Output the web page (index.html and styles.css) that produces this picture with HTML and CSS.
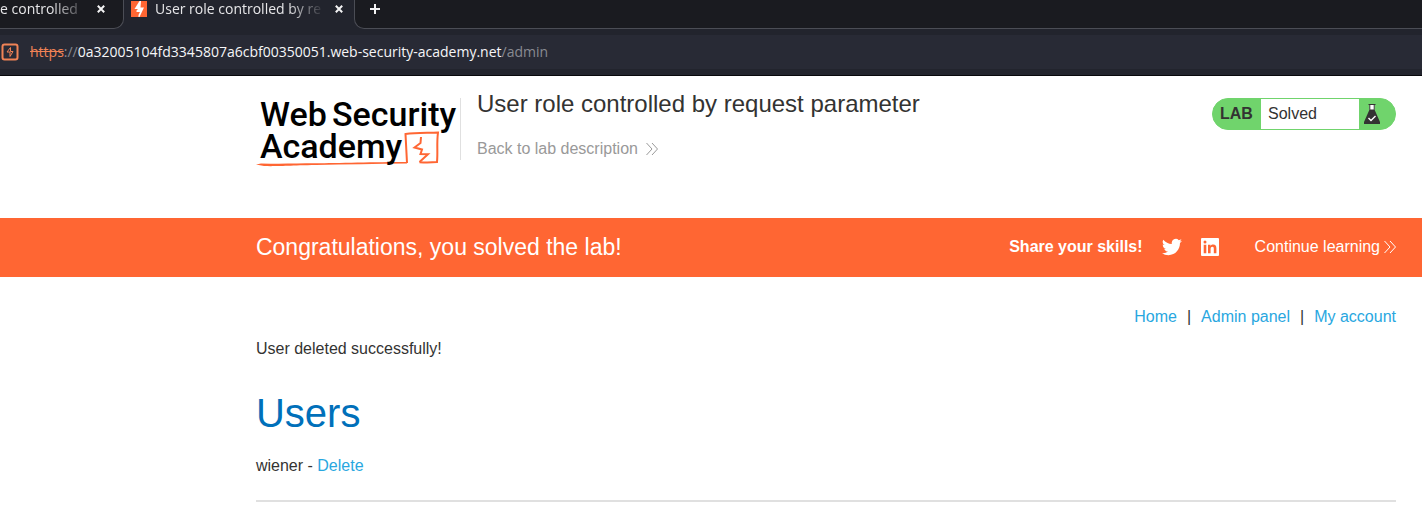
FILE: index.html
```html
<!DOCTYPE html>
<html lang="en">
<head>
<meta charset="utf-8">
<title>User role controlled by request parameter</title>
<link rel="stylesheet" href="styles.css">
</head>
<body>
<div class="browser">
  <div class="tabs">
    <div class="tab tab-previous">
      <span class="tab-title fade-dim">e controlled</span>
      <button class="tab-close" aria-label="Close previous tab"><svg width="8" height="8" viewBox="0 0 8 8"><path d="M.8.8l6.400 6.400M7.200.8L.8 7.200"/></svg></button>
    </div>
    <div class="tab tab-current">
      <svg class="favicon" width="16" height="16" viewBox="0 0 16 16"><path fill="#ff6633" d="M0 0h16v16H0z"/><path fill="#fff" d="M8.500 0H10L9.500 6.500H13L8.500 16H7.500V14L9 11H5.500V9.500L7 8H3.500z"/></svg>
      <span class="tab-title fade">User role controlled by re</span>
      <button class="tab-close" aria-label="Close tab"><svg width="8" height="8" viewBox="0 0 8 8"><path d="M.8.8l6.400 6.400M7.200.8L.8 7.200"/></svg></button>
    </div>
    <div class="tab-rest">
      <button class="new-tab" aria-label="New tab"><svg width="10" height="10" viewBox="0 0 10 10"><path d="M5 0v10M0 5h10"/></svg></button>
    </div>
  </div>
  <div class="toolbar">
    <div class="address">
      <svg class="site-icon" width="18" height="18" viewBox="0 0 18 18"><rect x="1.500" y="1.500" width="15" height="15" rx="2"/><path d="M9.500 4.500L6 9h3v4.500M9.500 4.500V8.500H12L9 13.500"/></svg>
      <div class="url" role="textbox" aria-label="Address"><s>https</s>://<b>0a32005104fd3345807a6cbf00350051.web-security-academy.net</b>/admin</div>
    </div>
  </div>
</div>

<header class="lab-header wrap">
  <svg class="logo" width="204" height="76" viewBox="0 0 204 76" role="img" aria-label="Web Security Academy">
    <g class="logo-line">
      <path class="underline" d="M0 67.500L5 66.500C25 67 40 66.500 60 66.300S120 65 151 65V66.500C120 66.800 90 67.500 60 68S20 69.500 8 69z"/>
      <path d="M151 66L149.500 37C160 35.500 171 36 182 35.500C180.500 46 182 55 181 65C175 65.500 170 65.500 163.500 65.200"/>
      <path d="M165 40L164.500 46L158.500 50.500L166 52.500L164.500 57L172 57.200L163.500 65"/>
    </g>
    <text class="logo-text" y="29"><tspan x="4">Web</tspan><tspan x="76">Security</tspan></text>
    <text class="logo-text" x="4" y="61">Academy</text>
  </svg>
  <div class="lab-title">
    <h2>User role controlled by request parameter</h2>
    <a class="back" href="#">Back to lab description
      <svg class="chevrons" width="12" height="14" viewBox="0 0 12 14"><path d="M.5 1l5.500 6-5.500 6M6 1l5.500 6L6 13"/></svg>
    </a>
  </div>
  <div class="status">
    <span class="status-label">LAB</span>
    <span class="status-value">Solved</span>
    <svg class="flask" width="16" height="20" viewBox="0 0 16 20"><path fill="#fff" d="M5.500 1h5v5h-5z"/><path fill="#333332" d="M4.500 0h7v1h-.8V6L16 18v2H0v-2L5.300 6V1h-.8zM6.300 1v4.500h3.400V1z"/><path fill="none" stroke="#fff" stroke-width="1.400" d="M4.500 14L7 16.500l4.500-4.500"/></svg>
  </div>
</header>

<section class="banner wrap">
  <h4>Congratulations, you solved the lab!</h4>
  <div class="share">
    <span class="share-label">Share your skills!</span>
    <a href="#" aria-label="Twitter"><svg width="20" height="20" viewBox="0 0 24 24"><path fill="#fff" d="M23.950 4.570a10 10 0 0 1-2.820.770 4.960 4.960 0 0 0 2.160-2.720 9.900 9.900 0 0 1-3.120 1.190 4.920 4.920 0 0 0-8.380 4.480C7.690 8.090 4.070 6.130 1.640 3.160a4.920 4.920 0 0 0 1.520 6.570 4.900 4.900 0 0 1-2.230-.61v.060a4.920 4.920 0 0 0 3.950 4.830 5 5 0 0 1-2.210.080 4.940 4.940 0 0 0 4.600 3.420A9.870 9.870 0 0 1 0 19.540a13.990 13.990 0 0 0 7.550 2.210c9.050 0 14-7.500 14-13.980v-.640a9.940 9.940 0 0 0 2.400-2.560z"/></svg></a>
    <a href="#" aria-label="LinkedIn"><svg width="18" height="18" viewBox="0 0 18 18"><rect width="18" height="18" rx="1" fill="#fff"/><path fill="#ff6633" d="M2.700 6.800h2.600v8.500H2.700zM2.500 4a1.500 1.500 0 1 1 3 0 1.500 1.500 0 0 1-3 0M7 6.800h2.500V8c.7-1 1.500-1.400 2.700-1.400 2.300 0 3.200 1.400 3.200 3.900v4.800h-2.600v-4.300c0-1.400-.3-2.200-1.400-2.200S9.600 9.700 9.600 11v4.300H7z"/></svg></a>
  </div>
  <a class="continue" href="#">Continue learning
    <svg class="chevrons" width="12" height="14" viewBox="0 0 12 14"><path d="M.5 1l5.500 6-5.500 6M6 1l5.500 6L6 13"/></svg>
  </a>
</section>

<main class="content wrap">
  <nav class="links">
    <a href="#">Home</a><span>|</span><a href="#">Admin panel</a><span>|</span><a href="#">My account</a>
  </nav>
  <p class="message">User deleted successfully!</p>
  <h1>Users</h1>
  <p class="user">wiener - <a href="#">Delete</a></p>
  <hr>
</main>
</body>
</html>
```
FILE: styles.css
```css
* { box-sizing: border-box; }
body {
  margin: 0;
  background: #fff;
  color: #333332;
  font: 16px/24px "Liberation Sans", Arial, sans-serif;
}
h1, h2, h4, p { margin: 0; font-weight: 400; }
a { color: #29a7df; text-decoration: none; }
button { border: 0; padding: 0; background: none; display: flex; }
.wrap { padding-left: 18%; padding-right: 26px; }

.browser {
  background: #22242d;
  border-bottom: 1px solid #08080c;
  color: #e6e6e8;
  font-family: "Open Sans", "Noto Sans", sans-serif;
}
.tabs { display: flex; height: 29px; background: #22242d; }
.tab, .tab-rest { display: flex; height: 29px; padding-bottom: 11px; align-items: center; }
.tab-previous {
  width: 124px;
  justify-content: space-between;
  padding-right: 18px;
  background: #1a1b20;
  border: solid #4b4d55;
  border-width: 0 1px 1px 0;
  border-bottom-right-radius: 10px;
}
.tab-current { width: 230px; padding-left: 7px; padding-right: 11px; }
.tab-rest {
  flex: 1;
  padding-left: 15px;
  background: #1a1b20;
  border: solid #4b4d55;
  border-width: 0 0 1px 1px;
  border-bottom-left-radius: 10px;
}
.tab-title { font-size: 14px; line-height: 20px; white-space: nowrap; }
.tab-current .tab-title { margin-left: 8px; margin-right: auto; }
.fade { mask-image: linear-gradient(to right, #000 80%, rgba(0, 0, 0, .1)); }
.fade-dim { mask-image: linear-gradient(to right, #000 65%, rgba(0, 0, 0, .3)); }
.tab-close, .new-tab { stroke: #f3f3f4; stroke-width: 2; fill: none; }
.toolbar { padding: 6px 0; }
.address { display: flex; align-items: center; gap: 11px; height: 34px; padding-left: 1px; background: #282a35; }
.site-icon { fill: none; stroke: #f08356; stroke-width: 2; }
.site-icon path { stroke-width: 1; }
.url { font-size: 14px; line-height: 20px; color: #898a92; white-space: nowrap; }
.url s { color: #f08356; }
.url b { color: #f6f6f8; font-weight: 400; }

.lab-header { display: flex; align-items: flex-start; height: 142px; padding-top: 22px; }
.logo { flex: none; margin-top: -1px; overflow: visible; }
.logo-text { font: 500 34px Roboto, sans-serif; fill: #000; }
.logo-line { fill: none; stroke: #ff6633; stroke-width: 2; }
.logo-line .underline { fill: #ff6633; stroke: none; }
.lab-title { flex: 1; height: 62px; border-left: 1px solid #e0e0e0; padding-left: 16px; }
.lab-title h2 { font-size: 24px; line-height: 28px; margin-top: -8px; }
.back { display: flex; align-items: center; gap: 8px; margin-top: 19px; color: #999; }
.chevrons { fill: none; stroke: currentColor; stroke-width: 1; }
.status {
  display: flex;
  align-items: center;
  width: 184px;
  height: 32px;
  border: 1px solid #70d46c;
  border-radius: 16px;
  overflow: hidden;
  background: #70d46c;
}
.status-label { width: 48px; padding-left: 7px; font-weight: 700; }
.status-value { width: 98px; padding-left: 7px; background: #fff; line-height: 30px; }
.flask { margin-left: 5px; }

.banner { display: flex; align-items: center; height: 59px; padding-bottom: 1px; background: #ff6633; color: #fff; }
.banner h4 { flex: 1; font-size: 23px; line-height: 28px; }
.share { display: flex; align-items: center; gap: 19px; }
.share a { display: flex; }
.share-label { font-weight: 700; }
.continue { display: flex; align-items: center; gap: 4px; margin-left: 36px; color: #fff; }

.content { padding-top: 28px; }
.links { display: flex; justify-content: flex-end; gap: 10px; }
.message { margin-top: 8px; }
h1 { margin-top: 28px; font-size: 40px; line-height: 48px; color: #0070ba; }
.user { margin-top: 17px; }
hr { margin: 22px 0 0; border: 0; border-top: 2px solid #e0e0e0; }
```
